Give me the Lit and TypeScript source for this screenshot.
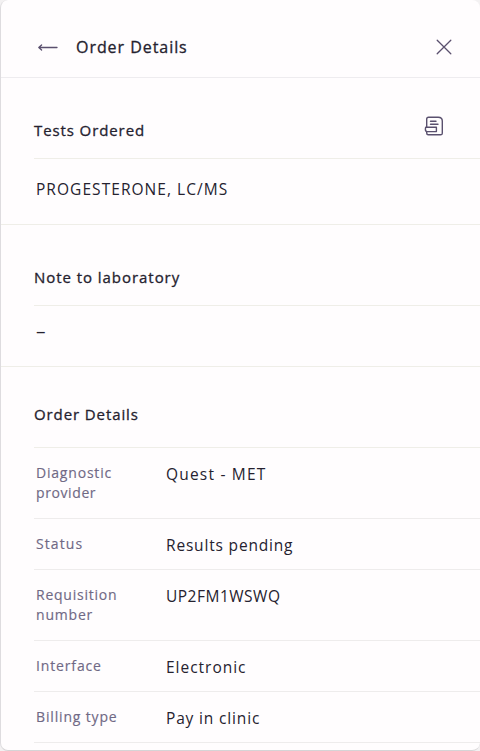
import { LitElement, html, css } from "lit";
import { customElement } from "lit/decorators.js";
import { styleMap } from "lit/directives/style-map.js";

interface Detail {
  label: string[];
  value: string;
  tracking: number[];
  valueTracking: number;
}

const DETAILS: Detail[] = [
  { label: ["Diagnostic", "provider"], value: "Quest - MET", tracking: [0.8, 0.6], valueTracking: 1.2 },
  { label: ["Status"], value: "Results pending", tracking: [1.1], valueTracking: 0.82 },
  { label: ["Requisition", "number"], value: "UP2FM1WSWQ", tracking: [0.76, 0.8], valueTracking: 0.5 },
  { label: ["Interface"], value: "Electronic", tracking: [0.85], valueTracking: 0.98 },
  { label: ["Billing type"], value: "Pay in clinic", tracking: [0.84], valueTracking: 0.84 },
];

const track = (px: number) => styleMap({ letterSpacing: `${px}px` });

@customElement("app-root")
export class AppRoot extends LitElement {
  static styles = css`
    :host {
      display: block;
      height: 751px;
      box-sizing: border-box;
      background: #f3f1f2;
      font-family: "Open Sans", "Noto Sans", sans-serif;
      font-size: 15.5px;
      color: #25222f;
      overflow: hidden;
    }
    .panel {
      box-sizing: border-box;
      height: 751px;
      border-left: 1px solid #dedcdf;
      border-bottom: 1px solid #d6d4d6;
      border-radius: 8px;
      background: #fffdfe;
      overflow: hidden;
    }
    header {
      box-sizing: border-box;
      height: 78px;
      padding: 17px 28px 0 36px;
      border-bottom: 1px solid #eeecef;
      display: flex;
      align-items: center;
    }
    button {
      display: flex;
      padding: 0;
      border: 0;
      background: none;
      color: #5a506e;
    }
    h1, h2 {
      margin: 0;
      font-weight: 400;
      line-height: 24px;
      white-space: nowrap;
      -webkit-text-stroke: 0.3px currentColor;
    }
    h1 { font-size: 16px; margin-left: 18px; flex: 1; }
    h2 { font-size: 15px; }
    .section { border-bottom: 1px solid #efeee8; }
    .heading {
      box-sizing: border-box;
      height: 81px;
      margin-left: 33px;
      padding: 40px 36px 0 0;
      border-bottom: 1px solid #efeee8;
      display: flex;
      align-items: flex-start;
      justify-content: space-between;
    }
    .details .heading { padding-top: 35px; }
    .requisition { margin-top: -2px; }
    .content {
      box-sizing: border-box;
      padding: 18px 0 0 35px;
      line-height: 24px;
    }
    .tests { height: 65px; }
    .note { height: 60px; padding-top: 13px; font-size: 19px; }
    dl { margin: 0 0 0 33px; }
    .row {
      display: grid;
      grid-template-columns: 130px 1fr;
      padding: 15px 0 15px 2px;
      border-bottom: 1px solid #eeecec;
    }
    dt {
      font-size: 14px;
      line-height: 20px;
      color: #706985;
      -webkit-text-stroke: 0.15px currentColor;
    }
    dt span { display: block; }
    dd { margin: 0; line-height: 22px; height: 20px; white-space: nowrap; }
  `;

  render() {
    return html`
      <div class="panel">
        <header>
          <button aria-label="Back">
            <svg width="21" height="14" viewBox="0 0 21 14" fill="none" stroke="currentColor" stroke-width="1.3" stroke-linecap="round" stroke-linejoin="round">
              <path d="M1.8 7.5H20M4.6 4.9L1.8 7.5L4.6 10.1" />
            </svg>
          </button>
          <h1 style=${track(0.95)}>Order Details</h1>
          <button aria-label="Close">
            <svg width="16" height="16" viewBox="0 0 16 16" fill="none" stroke="currentColor" stroke-width="1.3" stroke-linecap="round">
              <path d="M1.2 1.2L14.8 14.8M14.8 1.2L1.2 14.8" />
            </svg>
          </button>
        </header>
        <section class="section">
          <div class="heading">
            <h2 style=${track(0.9)}>Tests Ordered</h2>
            <button class="requisition" aria-label="View requisition">
              <svg width="20" height="20" viewBox="0 0 20 20" fill="none" stroke="currentColor" stroke-width="1.4" stroke-linejoin="round" stroke-linecap="round">
                <path d="M2.7 11V3Q2.7 1.2 4.5 1.2H14.2Q18.3 1.2 18.3 5V17.2Q18.3 18.8 16.5 18.8H4.3Q2.7 18.8 2.7 17V15.5" />
                <path d="M1.8 11.2H12.4V15.6H3Q1.4 15.6 1.4 13.5Q1.4 11.8 1.8 11.2Z" />
                <path d="M6.5 5.2H12M6.5 8.2H14" />
              </svg>
            </button>
          </div>
          <div class="content tests" style=${track(1.05)}>PROGESTERONE, LC/MS</div>
        </section>
        <section class="section">
          <div class="heading"><h2 style=${track(0.95)}>Note to laboratory</h2></div>
          <div class="content note">–</div>
        </section>
        <section class="details">
          <div class="heading"><h2 style=${track(0.9)}>Order Details</h2></div>
          <dl>
            ${DETAILS.map(
              (d) => html`
                <div class="row">
                  <dt>${d.label.map((line, i) => html`<span style=${track(d.tracking[i])}>${line}</span>`)}</dt>
                  <dd style=${track(d.valueTracking)}>${d.value}</dd>
                </div>
              `
            )}
          </dl>
        </section>
      </div>
    `;
  }
}
